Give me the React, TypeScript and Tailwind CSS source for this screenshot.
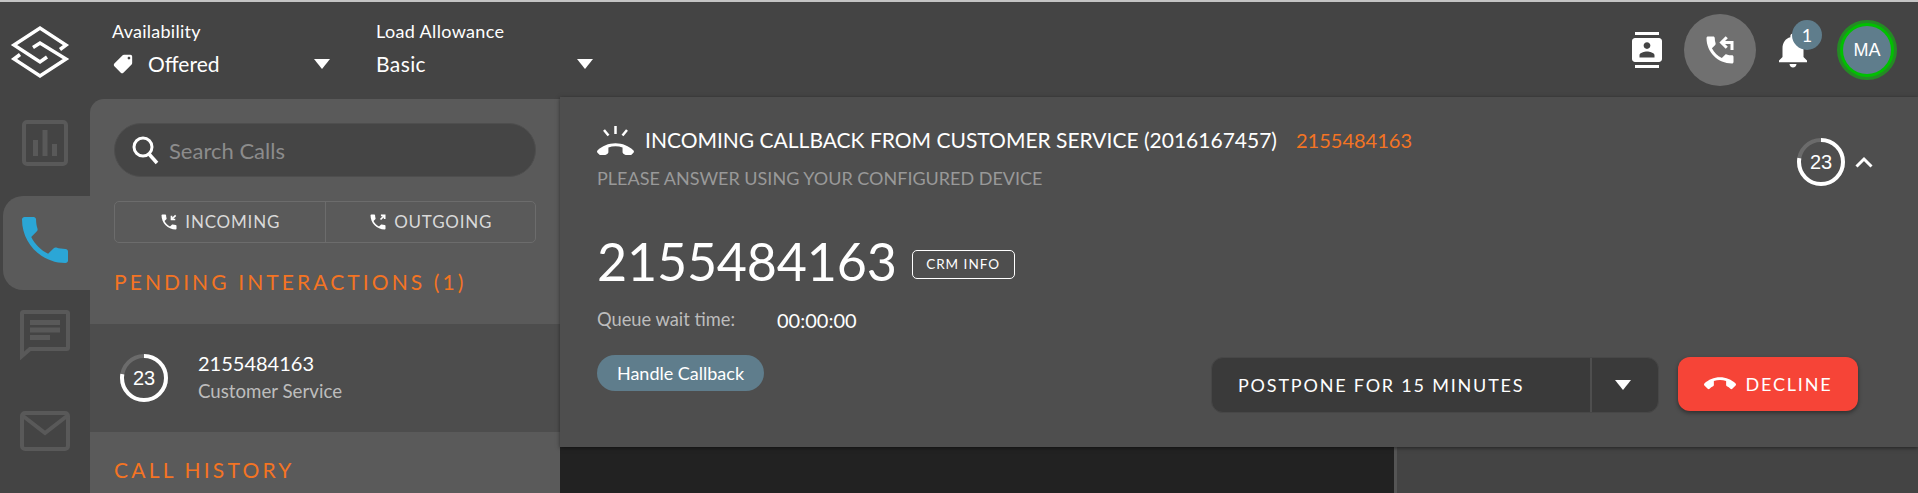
const CALL = 'M6.62 10.79c1.44 2.83 3.76 5.14 6.59 6.59l2.2-2.2c.27-.27.67-.36 1.02-.24 1.12.37 2.33.57 3.57.57.55 0 1 .45 1 1V20c0 .55-.45 1-1 1-9.39 0-17-7.61-17-17 0-.55.45-1 1-1h3.5c.55 0 1 .45 1 1 0 1.25.2 2.45.57 3.57.11.35.03.74-.25 1.02l-2.2 2.2z';
const CALL_END = 'M12 9c-1.6 0-3.15.25-4.6.72v3.1c0 .39-.23.74-.56.9-.98.49-1.87 1.12-2.66 1.85-.18.18-.43.28-.7.28-.28 0-.53-.11-.71-.29L.29 13.08c-.18-.17-.29-.42-.29-.7 0-.28.11-.53.29-.71C3.34 8.78 7.46 7 12 7s8.66 1.78 11.71 4.67c.18.18.29.43.29.71 0 .28-.11.53-.29.71l-2.48 2.48c-.18.18-.43.29-.71.29-.27 0-.52-.11-.7-.28-.79-.74-1.69-1.36-2.67-1.85-.33-.16-.56-.5-.56-.9v-3.1C15.15 9.25 13.6 9 12 9z';

function Caret({ className = '' }: { className?: string }) {
  return (
    <svg viewBox="0 0 16 10" className={`w-[16px] h-[10px] ${className}`}>
      <path d="M0 0h16L8 10z" fill="#fff" />
    </svg>
  );
}

function Timer({ className = '' }: { className?: string }) {
  return (
    <div className={`relative w-[48px] h-[48px] shrink-0 ${className}`}>
      <svg viewBox="0 0 48 48" className="w-full h-full">
        <circle cx="24" cy="24" r="22" fill="none" stroke="#6b6b6b" strokeWidth="4" />
        <circle cx="24" cy="24" r="22" fill="none" stroke="#fff" strokeWidth="4" strokeDasharray="107 139" transform="rotate(-90 24 24)" />
      </svg>
      <span className="absolute inset-0 flex items-center justify-center text-[20px] text-white font-['Liberation_Sans',sans-serif]">23</span>
    </div>
  );
}

function Logo() {
  return (
    <svg viewBox="0 0 80 100" className="w-[80px] h-[100px] shrink-0" fill="none" stroke="#fff" strokeWidth="3.5">
      <path d="M60 47.5 66 43 40 26 14 43 40 60 47 55" />
      <path d="M33 45.5 40 41 66 57 40 74 14 57 20 52.5" />
    </svg>
  );
}

function RailIcons({ name }: { name: 'chart' | 'chat' | 'mail' }) {
  if (name === 'chart') {
    return (
      <svg viewBox="0 0 46 46" className="w-[46px] h-[46px]">
        <rect x="2" y="2" width="42" height="42" rx="3" fill="none" stroke="#595959" strokeWidth="4" />
        <path d="M11 20h5v16h-5zM20.5 10h5v26h-5zM30 24h5v12h-5z" fill="#595959" />
      </svg>
    );
  }
  if (name === 'chat') {
    return (
      <svg viewBox="0 0 50 50" className="w-[50px] h-[50px]">
        <path d="M2 3.5a1.5 1.5 0 0 1 1.5-1.5h43a1.5 1.5 0 0 1 1.5 1.5v34a1.5 1.5 0 0 1-1.5 1.5H10L2 46z" fill="none" stroke="#595959" strokeWidth="4" />
        <path d="M10 10h30v5H10zM10 17.500h30v5H10zM10 25h20v5H10z" fill="#595959" />
      </svg>
    );
  }
  return (
    <svg viewBox="0 0 50 40" className="w-[50px] h-[40px]">
      <rect x="2" y="2" width="46" height="36" rx="3" fill="none" stroke="#595959" strokeWidth="4" />
      <path d="M3 5l22 17L47 5" fill="none" stroke="#595959" strokeWidth="4" />
    </svg>
  );
}

export default function App() {
  return (
    <div className="h-[493px] w-[1918px] overflow-hidden bg-[#444444] font-['Lato',sans-serif] text-white">
      <div className="h-[2px] bg-[#c4c4c4]" />

      {/* Top bar */}
      <header className="flex h-[96px] items-start">
        <Logo />
        <div className="ml-[32px] w-[218px] pt-[18px]">
          <p className="text-[18px] leading-[22px] tracking-[0.25px]">Availability</p>
          <div className="mt-[10px] flex items-center">
            <svg viewBox="0 0 24 24" className="w-[22px] h-[22px] -scale-x-100">
              <path fill="#fff" d="M21.41 11.58l-9-9C12.05 2.22 11.55 2 11 2H4c-1.1 0-2 .9-2 2v7c0 .55.22 1.05.59 1.42l9 9c.36.36.86.58 1.41.58.55 0 1.05-.22 1.41-.59l7-7c.37-.36.59-.86.59-1.41 0-.55-.23-1.06-.59-1.42zM5.500 7C4.670 7 4 6.330 4 5.500S4.670 4 5.500 4 7 4.670 7 5.500 6.330 7 5.500 7z" />
            </svg>
            <span className="ml-[14px] text-[21px] leading-[24px]">Offered</span>
            <Caret className="ml-auto" />
          </div>
        </div>
        <div className="ml-[46px] w-[217px] pt-[18px]">
          <p className="text-[18px] leading-[22px] tracking-[0.35px]">Load Allowance</p>
          <div className="mt-[10px] flex h-[24px] items-center">
            <span className="text-[21px] leading-[24px] tracking-[0.4px]">Basic</span>
            <Caret className="ml-auto" />
          </div>
        </div>

        <div className="ml-auto flex items-center pt-[12px] pr-[21px]">
          <svg viewBox="0 0 24 24" className="w-[36px] h-[36px]" preserveAspectRatio="none">
            <path fill="#fff" d="M20 0H4v2h16V0zM4 24h16v-2H4v2zM20 4H4c-1.100 0-2 .9-2 2v12c0 1.100.9 2 2 2h16c1.100 0 2-.9 2-2V6c0-1.100-.9-2-2-2zm-8 2.750c1.240 0 2.250 1.010 2.250 2.250s-1.010 2.250-2.250 2.250S9.750 10.240 9.750 9 10.760 6.750 12 6.750zM17 17H7v-1.500c0-1.670 3.330-2.500 5-2.500s5 .83 5 2.500V17z" />
          </svg>
          <div className="ml-[19px] flex h-[72px] w-[72px] items-center justify-center rounded-full bg-[#707070]">
            <svg viewBox="0 0 24 24" className="w-[36px] h-[36px]">
              <path fill="#fff" d={CALL} />
              <path d="M13 7h7v5M16.500 3.500 13 7l3.500 3.500" fill="none" stroke="#fff" strokeWidth="2" />
            </svg>
          </div>
          <div className="relative ml-[22px] h-[40px] w-[32px]">
            <svg viewBox="0 0 24 24" className="absolute left-[-6px] top-[-1px] w-[42px] h-[42px]">
              <path fill="#fff" d="M12 22c1.100 0 2-.9 2-2h-4c0 1.100.89 2 2 2zm6-6v-5c0-3.070-1.640-5.640-4.500-6.320V4c0-.83-.67-1.500-1.500-1.500s-1.500.67-1.500 1.500v.68C7.630 5.360 6 7.920 6 11v5l-2 2v1h16v-1l-2-2z" />
            </svg>
            <span className="absolute left-[14px] top-[-10px] flex h-[30px] w-[30px] items-center justify-center rounded-full bg-[#5f7d8c] text-[18px]">1</span>
          </div>
          <div className="ml-[27px] flex h-[60px] w-[60px] items-center justify-center rounded-full border-[3px] border-[#258a25] bg-[#00c000] p-[3px]">
            <div className="flex h-full w-full items-center justify-center rounded-full bg-[#5f7d8c] font-['Liberation_Sans',sans-serif] text-[18px]">MA</div>
          </div>
        </div>
      </header>

      <div className="flex h-[395px]">
        {/* Left rail */}
        <nav className="flex w-[90px] shrink-0 flex-col pt-[22px]">
          <div className="flex justify-center"><RailIcons name="chart" /></div>
          <div className="ml-[3px] mt-[30px] flex h-[94px] items-center justify-center rounded-l-[20px] bg-[#5a5a5a] pr-[3px] pb-[7px]">
            <svg viewBox="3 3 18 18" className="w-[46px] h-[46px]">
              <path fill="#2ba6d6" d={CALL} />
            </svg>
          </div>
          <div className="mt-[20px] flex justify-center"><RailIcons name="chat" /></div>
          <div className="mt-[51px] flex justify-center"><RailIcons name="mail" /></div>
        </nav>

        {/* Calls panel */}
        <aside className="mt-[1px] w-[470px] shrink-0 rounded-tl-[14px] bg-[#5a5a5a]">
          <div className="px-[24px] pt-[24px]">
            <div className="flex h-[54px] items-center rounded-full border border-[#4e4e4e] bg-[#454545] pl-[16px]">
              <svg viewBox="0 0 28 30" className="w-[28px] h-[30px]" fill="none" stroke="#fff">
                <circle cx="12" cy="12" r="9" strokeWidth="3" />
                <path d="M18 19l8 9" strokeWidth="3.500" />
              </svg>
              <span className="ml-[10px] text-[22px] text-[#8c8c8c]">Search Calls</span>
            </div>
            <div className="mt-[24px] flex h-[42px] rounded-[5px] border border-[#6c6c6c]">
              <div className="flex flex-1 items-center justify-center gap-[6px] border-r border-[#6c6c6c]">
                <svg viewBox="0 0 24 24" className="w-[20px] h-[20px]">
                  <path fill="#fff" d={CALL} />
                  <path d="M20 4l-5 5M15 4.500V9h4.500" fill="none" stroke="#fff" strokeWidth="2" />
                </svg>
                <span className="text-[17px] tracking-[0.8px] text-[#d9d9d9]">INCOMING</span>
              </div>
              <div className="flex flex-1 items-center justify-center gap-[6px]">
                <svg viewBox="0 0 24 24" className="w-[20px] h-[20px]">
                  <path fill="#fff" d={CALL} />
                  <path d="M15 9l5-5M15.500 4H20v4.500" fill="none" stroke="#fff" strokeWidth="2" />
                </svg>
                <span className="text-[17px] tracking-[0.8px] text-[#d9d9d9]">OUTGOING</span>
              </div>
            </div>
            <h2 className="mt-[27px] text-[21px] leading-[24px] tracking-[3.1px] text-[#f47423]">PENDING INTERACTIONS (1)</h2>
          </div>

          <div className="mt-[30px] flex h-[108px] items-center bg-[#4d4d4d] pl-[30px]">
            <Timer />
            <div className="ml-[30px] -mt-[2px]">
              <p className="text-[20px] leading-[24px]">2155484163</p>
              <p className="mt-[4px] text-[18.7px] leading-[24px] text-[#bdbdbd]">Customer Service</p>
            </div>
          </div>

          <h2 className="mt-[26px] px-[24px] text-[21px] leading-[24px] tracking-[3.2px] text-[#f47423]">CALL HISTORY</h2>
        </aside>

        {/* Main column */}
        <main className="flex min-w-0 flex-1 flex-col">
          <section className="relative z-10 -mt-[1px] flex h-[350px] flex-col bg-[#4e4e4e] pl-[37px] shadow-[0_1px_4px_rgba(0,0,0,0.5)]">
            <div className="flex pt-[27px]">
              <div className="min-w-0 flex-1">
                <div className="flex h-[32px] items-center">
                  <svg viewBox="0 0 37 30" className="w-[37px] h-[30px] shrink-0">
                    <path d="M18.500 1v8M7 5l4.500 5.500M30 5l-4.500 5.500" stroke="#fff" strokeWidth="2.500" fill="none" />
                    <g transform="translate(0 7.500) scale(1.540)"><path fill="#fff" d={CALL_END} /></g>
                  </svg>
                  <span className="ml-[11px] text-[21px] text-white">INCOMING CALLBACK FROM CUSTOMER SERVICE (2016167457)</span>
                  <span className="ml-[19px] text-[20px] text-[#f47423]">2155484163</span>
                </div>
                <p className="mt-[10px] text-[18px] leading-[24px] text-[#999999]">PLEASE ANSWER USING YOUR CONFIGURED DEVICE</p>
              </div>
              <div className="flex items-center pr-[45px] pt-[10px]">
                <Timer />
                <svg viewBox="0 0 18 12" className="ml-[10px] w-[18px] h-[12px]">
                  <path d="M1.500 10.500 9 3l7.500 7.500" fill="none" stroke="#fff" strokeWidth="3" />
                </svg>
              </div>
            </div>

            <div className="mt-[40px] flex items-center">
              <span className="text-[52px] leading-[62px] tracking-[-0.2px]">2155484163</span>
              <span className="ml-[15px] mt-[6px] flex h-[29px] w-[103px] items-center justify-center rounded-[5px] border border-white text-[13.5px] tracking-[1px]">CRM INFO</span>
            </div>

            <div className="mt-[14px] flex h-[28px] items-center">
              <span className="w-[180px] text-[18.3px] text-[#bdbdbd]">Queue wait time:</span>
              <span className="text-[20px]">00:00:00</span>
            </div>

            <div className="flex items-start justify-between">
              <span className="mt-[21px] flex h-[36px] w-[167px] items-center justify-center rounded-full bg-[#5f7d8c] text-[18px]">Handle Callback</span>
              <div className="mt-[23px] flex pr-[60px]">
                <div className="flex h-[56px] w-[448px] items-center rounded-[12px] border border-[#474747] bg-[#3a3a3a]">
                  <span className="flex-1 pl-[26px] text-[18px] tracking-[1.8px]">POSTPONE FOR 15 MINUTES</span>
                  <span className="flex h-full w-[68px] items-center justify-center border-l-2 border-[#4e4e4e] pr-[4px]">
                    <Caret />
                  </span>
                </div>
                <button className="ml-[19px] flex h-[54px] w-[180px] items-center justify-center rounded-[12px] bg-[#f64437] shadow-[0_2px_4px_rgba(0,0,0,0.4)]">
                  <svg viewBox="0 0 24 24" className="w-[32px] h-[32px]">
                    <path fill="#fff" d={CALL_END} />
                  </svg>
                  <span className="ml-[10px] text-[18px] tracking-[1.8px]">DECLINE</span>
                </button>
              </div>
            </div>
          </section>

          <div className="flex flex-1">
            <div className="w-[834px] bg-[#222222]" />
            <div className="w-[3px] bg-[#555555]" />
            <div className="flex-1 bg-[#444444]" />
          </div>
        </main>
      </div>
    </div>
  );
}
